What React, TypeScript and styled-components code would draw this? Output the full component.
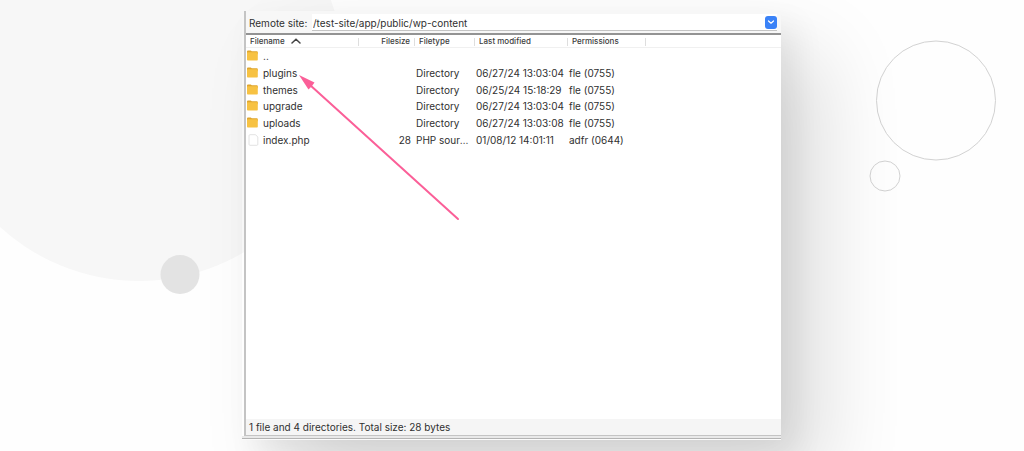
import React from "react";
import styled, { createGlobalStyle } from "styled-components";

const GlobalStyle = createGlobalStyle`
  * { box-sizing: border-box; }
  body {
    margin: 0;
    background: #fefefe;
    color: #303030;
    font-family: Inter, "Liberation Sans", sans-serif;
    font-size: 10px;
    line-height: 16px;
  }
`;

const Page = styled.main`
  position: relative;
  isolation: isolate;
  display: flex;
  flex-direction: column;
  min-height: 100vh;
  padding: 11px 243px 11px 242px;
  overflow: hidden;
`;

const Backdrop = styled.svg<{ $side: "left" | "right" }>`
  position: absolute;
  z-index: -1;
  top: 0;
  ${(p) => p.$side}: 0;
`;

const Window = styled.section`
  position: relative;
  flex: 1;
  display: flex;
  flex-direction: column;
  padding: 0 0 4px 2px;
  background: linear-gradient(#e9e9e9 50%, #b4b4b4 50% 75%, #fbfbfb 75%) bottom / 100% 4px no-repeat;
  box-shadow:
    42px 42px 76px rgba(0, 0, 0, 0.13),
    14px 14px 30px rgba(0, 0, 0, 0.07);
`;

const Panel = styled.div`
  flex: 1;
  display: flex;
  flex-direction: column;
  border-left: 2px solid #c4c4c4;
  border-bottom: 1px solid #c4c4c4;
  background: #fff;
`;

const PathBar = styled.form`
  display: flex;
  align-items: flex-end;
  height: 24px;
  padding: 0 4px 2px 3px;
  background: #f7f7f7;
  border-bottom: 2px solid #939393;
`;

const PathLabel = styled.label`
  flex: none;
  width: 63px;
  height: 16px;
`;

const PathField = styled.div`
  flex: 1;
  display: flex;
  align-items: center;
  height: 17px;
  background: #fff;
  border-bottom: 1px solid #c4c4c4;
`;

const PathInput = styled.input`
  flex: 1;
  min-width: 0;
  padding: 2px 1px 0;
  border: 0;
  outline: 0;
  background: none;
  color: inherit;
  font: inherit;
`;

const DropButton = styled.button`
  display: grid;
  place-items: center;
  width: 12px;
  height: 13px;
  padding: 0;
  border: 0;
  border-radius: 3px;
  background: #3a82f7;
`;

const Listing = styled.div`
  flex: 1;
`;

const FileTable = styled.table`
  width: 100%;
  table-layout: fixed;
  border-collapse: separate;
  border-spacing: 0;
  white-space: nowrap;
`;

const Col = styled.col<{ $width?: number }>`
  width: ${(p) => (p.$width ? `${p.$width}px` : "auto")};
`;

const HeadCell = styled.th<{ $align?: "right" }>`
  height: 13px;
  padding: 1px 5px 0 4px;
  background: linear-gradient(#dedede, #dedede) 100% 3px / 1px 8px no-repeat;
  border-bottom: 1px solid #f0f0f0;
  color: #3c3c3c;
  font-size: 8px;
  font-weight: 500;
  line-height: 11px;
  text-align: ${(p) => p.$align ?? "left"};

  &:last-child {
    background: none;
  }

  svg {
    margin-left: 6px;
  }
`;

const Row = styled.tr`
  height: 17px;

  &:nth-child(3n + 1) {
    height: 16px;
  }
`;

const Cell = styled.td<{ $align?: "right" }>`
  padding: 0 4px 0 1px;
  overflow: hidden;
  text-overflow: ellipsis;
  text-align: ${(p) => p.$align ?? "left"};
`;

const FileName = styled.div`
  display: flex;
  align-items: center;
  gap: 4px;
`;

const StatusBar = styled.footer`
  padding: 0 3px;
  background: #f5f5f5;
`;

const Pointer = styled.svg`
  position: absolute;
  top: 63px;
  left: 56px;
  pointer-events: none;
`;

const FolderIcon = () => (
  <svg width="12" height="12" viewBox="0 0 12 12" aria-hidden="true">
    <path d="M0 1.500a1 1 0 0 1 1-1h2.700l1.100 .7H9.800a1 1 0 0 1 1 1v2H0z" fill="#dfa52c" />
    <rect y="2.200" width="10.800" height="8.300" rx=".8" fill="#f7c243" />
  </svg>
);

const DocumentIcon = () => (
  <svg width="12" height="12" viewBox="0 0 12 12" aria-hidden="true">
    <path
      d="M3 .7h5.500l2.300 2.300v7.300a1 1 0 0 1-1 1H3a1 1 0 0 1-1-1V1.700a1 1 0 0 1 1-1z"
      fill="#fff"
      stroke="#dadada"
      strokeWidth=".8"
    />
  </svg>
);

type Entry = {
  name: string;
  folder: boolean;
  size?: string;
  type?: string;
  modified?: string;
  permissions?: string;
};

const entries: Entry[] = [
  { name: "..", folder: true },
  { name: "plugins", folder: true, type: "Directory", modified: "06/27/24 13:03:04", permissions: "fle (0755)" },
  { name: "themes", folder: true, type: "Directory", modified: "06/25/24 15:18:29", permissions: "fle (0755)" },
  { name: "upgrade", folder: true, type: "Directory", modified: "06/27/24 13:03:04", permissions: "fle (0755)" },
  { name: "uploads", folder: true, type: "Directory", modified: "06/27/24 13:03:08", permissions: "fle (0755)" },
  { name: "index.php", folder: false, size: "28", type: "PHP source", modified: "01/08/12 14:01:11", permissions: "adfr (0644)" },
];

export default function App() {
  return (
    <Page>
      <GlobalStyle />
      <Backdrop $side="left" width="360" height="300" aria-hidden="true">
        <circle cx="139" cy="75" r="206" fill="#f7f7f7" />
        <circle cx="180" cy="274.500" r="19.500" fill="#e3e3e3" />
      </Backdrop>
      <Backdrop $side="right" width="160" height="200" fill="none" stroke="#d2d2d2" aria-hidden="true">
        <circle cx="72" cy="100.500" r="59.500" />
        <circle cx="21" cy="176" r="15" />
      </Backdrop>

      <Window>
        <Panel>
          <PathBar onSubmit={(e) => e.preventDefault()}>
            <PathLabel htmlFor="remote-path">Remote site:</PathLabel>
            <PathField>
              <PathInput id="remote-path" defaultValue="/test-site/app/public/wp-content" />
              <DropButton type="button" aria-label="Show recent paths">
                <svg width="8" height="6" viewBox="0 0 8 6" fill="none" stroke="#fff" strokeWidth="1.200">
                  <path d="M1.500 2 4 4.200 6.500 2" strokeLinecap="round" strokeLinejoin="round" />
                </svg>
              </DropButton>
            </PathField>
          </PathBar>

          <Listing>
            <FileTable>
              <colgroup>
                <Col $width={113} />
                <Col $width={56} />
                <Col $width={60} />
                <Col $width={93} />
                <Col $width={78} />
                <Col />
              </colgroup>
              <thead>
                <tr>
                  <HeadCell scope="col" aria-sort="ascending">
                    Filename
                    <svg width="10" height="6" viewBox="0 0 10 6" fill="none" stroke="#444" strokeWidth="1.500" aria-hidden="true">
                      <path d="M1 5 5 1.200 9 5" strokeLinecap="round" />
                    </svg>
                  </HeadCell>
                  <HeadCell scope="col" $align="right">Filesize</HeadCell>
                  <HeadCell scope="col">Filetype</HeadCell>
                  <HeadCell scope="col">Last modified</HeadCell>
                  <HeadCell scope="col">Permissions</HeadCell>
                  <HeadCell as="td" />
                </tr>
              </thead>
              <tbody>
                {entries.map((entry) => (
                  <Row key={entry.name}>
                    <Cell>
                      <FileName>
                        {entry.folder ? <FolderIcon /> : <DocumentIcon />}
                        {entry.name}
                      </FileName>
                    </Cell>
                    <Cell $align="right">{entry.size}</Cell>
                    <Cell>{entry.type}</Cell>
                    <Cell>{entry.modified}</Cell>
                    <Cell>{entry.permissions}</Cell>
                    <Cell />
                  </Row>
                ))}
              </tbody>
            </FileTable>
          </Listing>

          <StatusBar>1 file and 4 directories. Total size: 28 bytes</StatusBar>
        </Panel>

        <Pointer width="164" height="148" viewBox="0 0 164 148" fill="#fb5f98" aria-hidden="true">
          <path d="M12 11 160 145" stroke="#fb5f98" strokeWidth="2" strokeLinecap="round" />
          <path d="M1 1 16.500 8.500 14 12 10.500 15.500z" />
        </Pointer>
      </Window>
    </Page>
  );
}
